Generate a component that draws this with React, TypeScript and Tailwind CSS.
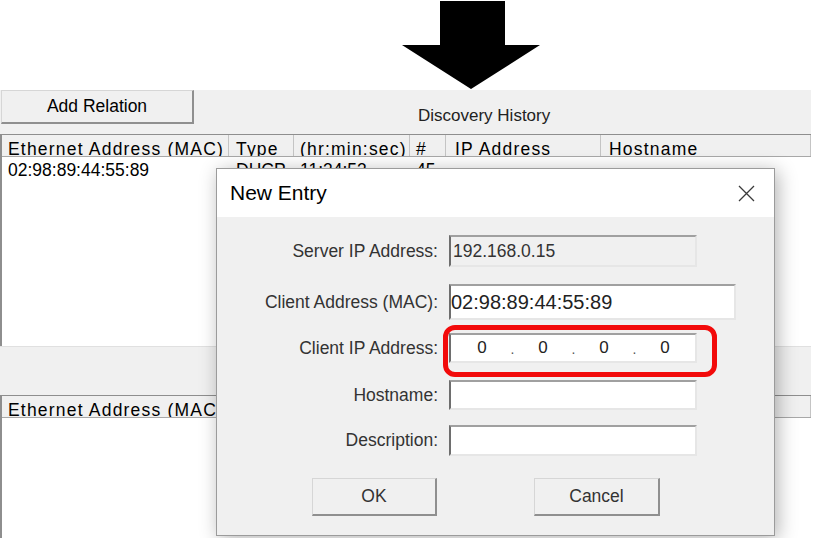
// DHCP server window with the "New Entry" dialog on top; the red box marks the
// client IP field (annotation from the original screenshot).

const cols = [
  { label: "Ethernet Address (MAC)", w: "w-[227px]", pl: "pl-[6px]" },
  { label: "Type", w: "w-[65px]", pl: "pl-[7px]" },
  { label: "(hr:min:sec)", w: "w-[116px]", pl: "pl-[6px]" },
  { label: "#", w: "w-[36px]", pl: "pl-[6px]" },
  { label: "IP Address", w: "w-[155px]", pl: "pl-[9px]" },
  { label: "Hostname", w: "flex-1", pl: "pl-[8px]" },
]

const row = ["02:98:89:44:55:89", "DHCP", "11:34:53", "45", "", ""]

function Arrow() {
  return (
    <svg width="138" height="89" viewBox="0 0 138 89" className="block">
      <polygon points="38,0 103,0 103,44 138,44 69,88 0,44 38,44" fill="#000" />
    </svg>
  )
}

function Table({ bodyH, rows }: { bodyH: string; rows: string[][] }) {
  return (
    <div className="flex shrink-0 flex-col border-l-2 border-t border-l-[#8e8e8e] border-t-[#8e8e8e] bg-white">
      <div className="flex h-[22px] shrink-0 overflow-hidden border-b border-[#a8a8a8] bg-[#f0f0f0] text-[17.5px] leading-[17.5px] tracking-[1.2px] text-black">
        {cols.map((c) => (
          <div key={c.label} className={`${c.w} ${c.pl} shrink-0 overflow-hidden whitespace-nowrap border-r border-[#c4c4c4] pt-[6px]`}>
            {c.label}
          </div>
        ))}
      </div>
      <div className={`${bodyH} shrink-0 overflow-hidden`}>
        {rows.map((r, i) => (
          <div key={i} className="flex text-[17.5px] leading-[17.5px] text-black">
            {cols.map((c, j) => (
              <div key={c.label} className={`${c.w} ${c.pl} shrink-0 overflow-hidden whitespace-nowrap pt-[5px]`}>
                {r[j]}
              </div>
            ))}
          </div>
        ))}
      </div>
    </div>
  )
}

function Field({ label, h, mt, w = "w-[248px]", children, bg = "bg-white" }: {
  label: string
  h: string
  mt: string
  w?: string
  bg?: string
  children?: React.ReactNode
}) {
  return (
    <div className={`flex items-center ${mt}`}>
      <div className="w-[221px] text-right text-[17.5px] text-[#333]">{label}</div>
      <div className={`ml-[11px] ${w} ${h} ${bg} flex items-center border-2 border-t-[#a0a0a0] border-l-[#6e6e6e] border-r-[#e6e6e6] border-b-[#e6e6e6]`}>
        {children}
      </div>
    </div>
  )
}

function WinButton({ children, className = "" }: { children: React.ReactNode; className?: string }) {
  return (
    <button className={`flex shrink-0 items-center justify-center border-t border-l border-r-2 border-b-2 border-t-[#d6d6d6] border-l-[#d6d6d6] border-r-[#8f8f8f] border-b-[#8f8f8f] bg-[#f0f0f0] text-[17.5px] text-[#333] ${className}`}>
      {children}
    </button>
  )
}

export default function App() {
  return (
    <div className="relative h-[538px] w-[813px] overflow-hidden bg-white font-['Liberation_Sans',Arial,sans-serif]">
      <div className="h-[90px] pl-[402px] pt-[1px]">
        <Arrow />
      </div>

      <div className="flex h-[448px] w-[811px] flex-col overflow-hidden bg-[#f0f0f0]">
        <div className="flex h-[44px] shrink-0">
          <WinButton className="ml-[1px] h-[34px] w-[193px] text-black">Add Relation</WinButton>
          <span className="ml-[224px] pt-[13px] text-[17px] text-[#222]">Discovery History</span>
        </div>

        <Table bodyH="h-[189px]" rows={[row]} />

        <div className="h-[49px] shrink-0 border-t border-[#e0e0e0]" />

        <Table bodyH="h-[200px]" rows={[]} />
      </div>

      {/* dialog */}
      <div className="absolute left-[216px] top-[168px] flex h-[368px] w-[559px] flex-col border border-[#9b9b9b] bg-[#f0f0f0] shadow-[3px_3px_18px_rgba(0,0,0,0.3)]">
        <div className="flex h-[48px] items-center justify-between bg-white pl-[13px] pr-[19px]">
          <span className="text-[21px] text-black">New Entry</span>
          <svg width="17" height="17" viewBox="0 0 17 17">
            <path d="M1 1L16 16M16 1L1 16" stroke="#3a3a3a" strokeWidth="1.3" />
          </svg>
        </div>

        <div className="flex flex-col">
          <Field label="Server IP Address:" h="h-[32px]" mt="mt-[18px]" bg="bg-[#f0f0f0]">
            <span className="pl-[2px] text-[17.5px] text-[#333]">192.168.0.15</span>
          </Field>
          <Field label="Client Address (MAC):" h="h-[36px]" mt="mt-[17px]" w="w-[287px]">
            <span className="text-[20px] text-[#222]">02:98:89:44:55:89</span>
          </Field>
          <div className="mt-[13px] flex items-center">
            <div className="w-[221px] text-right text-[17.5px] text-[#333]">Client IP Address:</div>
            <div className="relative ml-[11px]">
              <div className="flex h-[30px] w-[248px] items-center border-2 border-t-[#a0a0a0] border-l-[#6e6e6e] border-r-[#e6e6e6] border-b-[#e6e6e6] bg-white pl-[11px] text-[17px] text-[#222]">
                {["0", "0", "0", "0"].map((o, i) => (
                  <span key={i} className="flex">
                    <span className="w-[40px] text-center">{o}</span>
                    {i < 3 && <span className="w-[21px] pt-[4px] text-center text-[14px] text-[#555]">.</span>}
                  </span>
                ))}
              </div>
              <div className="absolute -left-[6px] -top-[8px] h-[52px] w-[274px] rounded-[12px] border-[5px] border-[#f20a0a]" />
            </div>
          </div>
          <Field label="Hostname:" h="h-[30px]" mt="mt-[17px]" />
          <Field label="Description:" h="h-[31px]" mt="mt-[15px]" />

          <div className="mt-[22px] flex pl-[95px]">
            <WinButton className="h-[38px] w-[125px]">OK</WinButton>
            <WinButton className="ml-[97px] h-[38px] w-[126px]">Cancel</WinButton>
          </div>
        </div>
      </div>
    </div>
  )
}
